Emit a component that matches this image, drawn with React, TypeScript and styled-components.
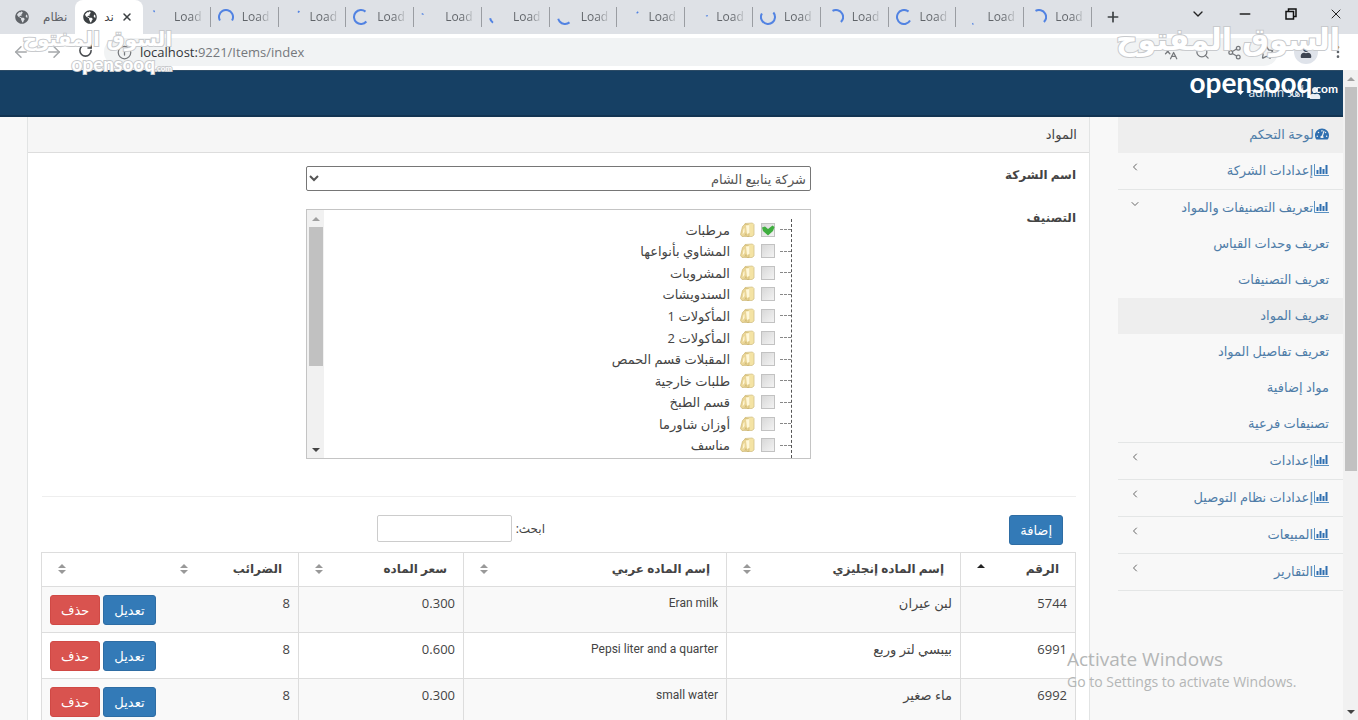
import React from "react";
import styled, { createGlobalStyle } from "styled-components";
import { ArrowLeft, ArrowRight, RotateCw, Info, X, Plus, ChevronDown, ChevronLeft, Search, Share2, Star, MoreVertical, Minus, Languages } from "lucide-react";
import { FaTachometerAlt, FaGlobeAmericas, FaUser } from "react-icons/fa";

const GlobalStyle = createGlobalStyle`
  * { box-sizing: border-box; }
  body { margin: 0; background: #f8f8f8; color: #444; font: 13px/20px "Open Sans", "DejaVu Sans", sans-serif; }
  a { color: #4f7da8; text-decoration: none; }
  ul { list-style: none; margin: 0; padding: 0; }
  button, input, select { font: inherit; }
`;

const Browser = styled.div`
  position: relative;
  display: flex;
  flex-direction: column;
  height: 100vh;
  overflow: hidden;
`;

const TabStrip = styled.div`
  display: flex;
  flex: none;
  height: 34px;
  background: #dee1e6;
  color: #5f6368;
`;

const FirstTab = styled.div`
  display: flex;
  align-items: center;
  gap: 14px;
  width: 75px;
  padding-left: 15px;
  font-size: 12px;
`;

const ActiveTab = styled.div`
  display: flex;
  align-items: center;
  justify-content: space-between;
  width: 68px;
  padding: 0 10px 0 8px;
  border-radius: 8px 8px 0 0;
  background: #fff;
  font-size: 12px;
  color: #3c4043;
`;

const LoadingTabs = styled.div`
  display: flex;
  flex: 1;
  align-items: center;
`;

const LoadingTab = styled.div`
  display: flex;
  flex: 1 1 0;
  align-items: center;
  gap: 8px;
  height: 20px;
  padding-left: 7px;
  border-right: 1px solid #9a9da2;
  font-size: 12px;
`;

const TabLabel = styled.span`
  background: linear-gradient(90deg, #5f6368 60%, #c4c7cb);
  background-clip: text;
  color: transparent;
`;

const IconButton = styled.button`
  display: flex;
  align-items: center;
  justify-content: center;
  padding: 0;
  border: 0;
  background: none;
  color: inherit;
`;

const NewTab = styled(IconButton)`
  width: 42px;
  color: #3c4043;
`;

const WindowControls = styled.div`
  display: flex;
  width: 224px;
  justify-content: space-between;
  padding: 0 14px 6px 56px;
  color: #222;
`;

const Toolbar = styled.div`
  display: flex;
  flex: none;
  align-items: center;
  height: 36px;
  padding: 0 12px;
  background: #fff;
  color: #5f6368;
`;

const NavIcons = styled.div`
  display: flex;
  gap: 15px;
  width: 92px;
  color: #a5a8ab;
`;

const Address = styled.div`
  display: flex;
  flex: 1;
  align-items: center;
  gap: 8px;
  height: 28px;
  padding: 0 4px 0 13px;
  border-radius: 14px;
  background: #f1f3f4;
  font-size: 13px;
  color: #75787c;
  b { font-weight: 400; color: #333639; }
`;

const AddressActions = styled.div`
  display: flex;
  gap: 17px;
  margin-left: auto;
`;

const ProfileArea = styled.div`
  display: flex;
  align-items: center;
  gap: 12px;
  padding-left: 16px;
`;

const Avatar = styled.span`
  display: flex;
  align-items: center;
  justify-content: center;
  width: 24px;
  height: 24px;
  border-radius: 50%;
  background: #dfe3ea;
  color: #3c4350;
`;

const Viewport = styled.div`
  display: flex;
  flex: 1;
  min-height: 0;
`;

const Site = styled.div`
  display: flex;
  flex: 1;
  flex-direction: column;
  min-width: 0;
  overflow: hidden;
`;

const Navbar = styled.header`
  display: flex;
  flex: none;
  align-items: center;
  gap: 5px;
  height: 47px;
  padding: 0 22px;
  border-top: 1px solid #2d4c66;
  border-bottom: 2px solid #123452;
  background: #164064;
  color: #e8eef4;
  font-size: 12px;
`;

const Columns = styled.div`
  display: flex;
  align-items: stretch;
`;

const Sidebar = styled.nav`
  flex: none;
  width: 253px;
  padding-left: 28px;
`;

const MenuLink = styled.a<{ $active?: boolean }>`
  display: flex;
  align-items: center;
  gap: 1px;
  height: 36px;
  padding: 0 14px 2px 11px;
  background: ${(p) => (p.$active ? "#eeeeee" : "transparent")};
`;

const MenuItem = styled.li`
  border-bottom: 1px solid #e4e6e6;
  &:first-child { border-bottom: 0; }
`;

const Arrow = styled.span`
  display: flex;
  margin-right: auto;
  padding-bottom: 6px;
  color: #666;
`;

const Content = styled.main`
  flex: 1;
  min-width: 0;
  margin-left: 27px;
  border: 1px solid #e2e4e4;
  border-width: 0 1px;
  background: #fff;
`;

const PanelHeading = styled.h1`
  margin: 0;
  height: 36px;
  padding: 7px 12px;
  border-bottom: 1px solid #ddd;
  background: #f6f6f6;
  font-size: 13px;
  line-height: 20px;
  font-weight: 400;
`;

const PanelBody = styled.div`
  padding: 13px 13px 13px 14px;
`;

const FormRow = styled.div`
  display: grid;
  grid-template-columns: 265fr 505fr 264fr;
  align-items: start;
  margin-bottom: 18px;
`;

const fieldName = `
  font-size: 12px;
  line-height: 18px;
  font-weight: 700;
`;

const FieldLabel = styled.label`
  ${fieldName}
`;

const FieldTitle = styled.span`
  ${fieldName}
`;

const Select = styled.select`
  height: 25px;
  width: 100%;
  border: 1px solid #767676;
  border-radius: 2px;
  background: #fff;
  color: #555;
`;

const TreeBox = styled.div`
  display: flex;
  height: 250px;
  border: 1px solid #c4c4c4;
`;

const Tree = styled.ul`
  display: flex;
  flex: 1;
  flex-direction: column;
  margin: 9px 18px 0 0;
  padding-bottom: 2px;
  border-right: 1px dashed #555;
`;

const TreeRow = styled.li`
  display: flex;
  flex: 1;
  align-items: center;
  &::before {
    content: "";
    width: 11px;
    margin-left: 5px;
    border-top: 1px dashed #888;
  }
`;

const TreeLabel = styled.label`
  display: flex;
  align-items: center;
  gap: 6px;
  span { padding-right: 3px; }
`;

const CheckHolder = styled.i`
  position: relative;
  display: flex;
  svg { position: absolute; inset: 0; }
`;

const Check = styled.input`
  appearance: none;
  width: 14px;
  height: 14px;
  margin: 0;
  border: 1px solid #c2c2c2;
  background: linear-gradient(135deg, #d8d8d8, #f3f3f3);
`;

const Track = styled.div<{ $width: number }>`
  display: flex;
  flex: none;
  flex-direction: column;
  align-items: center;
  width: ${(p) => p.$width}px;
  background: #f1f1f1;
`;

const ScrollArrow = styled.button<{ $up?: boolean; $dim?: boolean }>`
  width: 100%;
  height: 17px;
  padding: 0;
  border: 0;
  background: none;
  &::before {
    content: "";
    display: block;
    width: 0;
    margin: 0 auto;
    border: 4px solid transparent;
    border-top-width: ${(p) => (p.$up ? 0 : 4)}px;
    border-bottom-width: ${(p) => (p.$up ? 4 : 0)}px;
    border-${(p) => (p.$up ? "bottom" : "top")}-color: ${(p) => (p.$dim ? "#a0a0a0" : "#444")};
  }
`;

const Thumb = styled.div<{ $share: number }>`
  width: calc(100% - 3px);
  height: ${(p) => p.$share}%;
  margin-bottom: auto;
  background: #c1c1c1;
`;

const Divider = styled.hr`
  margin: 37px 0 18px;
  border: 0;
  border-top: 1px solid #eee;
`;

const TableTools = styled.div`
  display: grid;
  grid-template-columns: 518fr 503fr;
  align-items: start;
  height: 37px;
  padding-right: 13px;
`;

const Button = styled.button<{ $danger?: boolean }>`
  height: 30px;
  padding: 0 10px;
  border: 1px solid ${(p) => (p.$danger ? "#d04945" : "#2e6da4")};
  border-radius: 3px;
  background: ${(p) => (p.$danger ? "#d9534f" : "#337ab7")};
  color: #fff;
  font-size: 13px;
  line-height: 20px;
`;

const SearchLabel = styled.label`
  display: flex;
  align-items: center;
  gap: 4px;
  font-size: 12px;
`;

const SearchInput = styled.input`
  width: 135px;
  height: 27px;
  border: 1px solid #ccc;
  border-radius: 2px;
  background: #fff;
`;

const Table = styled.table`
  width: 100%;
  table-layout: fixed;
  border-collapse: collapse;
  border: 1px solid #ddd;
  font-size: 13px;
`;

const HeadCell = styled.th<{ $open?: boolean }>`
  height: 34px;
  padding: 0 16px 2px;
  border: 1px solid #ddd;
  border-width: 1px ${(p) => (p.$open ? 0 : 1)}px 1px 0;
  font-size: 12px;
  text-align: right;
  div { display: flex; align-items: center; justify-content: space-between; }
`;

const Row = styled.tr`
  height: 46px;
  border-bottom: 1px solid #ddd;
  &:nth-child(odd) { background: #f9f9f9; }
`;

const Cell = styled.td<{ $open?: boolean; $latin?: boolean }>`
  padding: 6px 8px;
  border-right: ${(p) => (p.$open ? 0 : 1)}px solid #ddd;
  ${(p) => p.$latin && "font-family: Roboto, sans-serif; font-size: 12px;"}
  vertical-align: top;
  text-align: right;
`;

const Actions = styled.div`
  display: flex;
  justify-content: flex-end;
  gap: 3px;
  padding-top: 2px;
`;

const Activate = styled.div`
  position: absolute;
  right: 56px;
  bottom: 28px;
  width: 235px;
  color: #b4b6b6;
  font-size: 14px;
  line-height: 20px;
  white-space: nowrap;
  strong { display: block; font-size: 19px; line-height: 26px; font-weight: 400; }
`;

const Mark = styled.div<{ $small?: boolean }>`
  position: absolute;
  top: ${(p) => (p.$small ? 22 : 15)}px;
  ${(p) => (p.$small ? "left: 20px" : "right: 20px")};
  width: ${(p) => (p.$small ? 152 : 222)}px;
  color: #fff;
  font-family: "DejaVu Sans", sans-serif;
  font-weight: 700;
  font-size: ${(p) => (p.$small ? 20 : 30)}px;
  line-height: ${(p) => (p.$small ? 34 : 50)}px;
  text-align: right;
  white-space: nowrap;
  -webkit-text-stroke: 2px #c8cacd;
  paint-order: stroke fill;
  pointer-events: none;
`;

const MarkLatin = styled.div<{ $small?: boolean }>`
  font-family: Lato, sans-serif;
  font-size: ${(p) => (p.$small ? 19 : 28)}px;
  line-height: ${(p) => (p.$small ? 16 : 34)}px;
  -webkit-text-stroke: ${(p) => (p.$small ? "2px #c8cacd" : "0")};
  small { font-size: ${(p) => (p.$small ? 8 : 12)}px; }
`;

const arcs: [number, number][] = [
  [320, 12], [240, 240], [35, 14], [130, 270], [290, 10], [215, 45], [140, 115],
  [45, 12], [75, 10], [50, 250], [330, 165], [120, 280], [160, 10], [330, 165],
];

function Spinner({ start, sweep }: { start: number; sweep: number }) {
  return (
    <svg width="16" height="16" viewBox="0 0 16 16" aria-hidden="true">
      <circle cx="8" cy="8" r="7" fill="none" stroke="#5283e2" strokeWidth="2" pathLength={360} strokeDasharray={`${sweep} 360`} transform={`rotate(${start - 90} 8 8)`} />
    </svg>
  );
}

function ChartIcon() {
  return (
    <svg width="15" height="12" viewBox="0 0 15 12" aria-hidden="true">
      <path d="M.5 0v11.5H15" fill="none" stroke="#5a91c2" />
      <path d="M2.500 6h2v4h-2zM5.500 3h2v7h-2zM8.500 5h2v5h-2zM11.500 1h2v9h-2z" fill="#2f6fb0" />
    </svg>
  );
}

function FolderIcon() {
  return (
    <svg width="16" height="16" viewBox="0 0 16 16" aria-hidden="true">
      <path d="M6 1.500 13.500 1 15 2.500V13l-2 1.500H6z" fill="#f4e3a4" stroke="#d3c28a" strokeWidth=".8" />
      <path d="M6 2 3.500 4.500 1.500 12.500l1.500 2h2.500l1.500-3 1 3H10V3z" fill="#ead596" stroke="#c8b06a" strokeWidth=".6" />
      <path d="M7 3.500 10.500 3v8L8 12zM4.500 7 5.500 6v4l-2 2.500z" fill="#fff8d9" />
    </svg>
  );
}

function SortIcon({ up }: { up?: boolean }) {
  return (
    <svg width="8" height="12" viewBox="0 0 8 12" aria-hidden="true">
      <path d="M0 5 4 1l4 4z" fill={up ? "#222" : "#999"} />
      {!up && <path d="M0 7h8l-4 4z" fill="#999" />}
    </svg>
  );
}

function Caret() {
  return (
    <svg width="7" height="4" viewBox="0 0 7 4" aria-hidden="true">
      <path d="M0 0h7L3.500 4z" fill="#fff" />
    </svg>
  );
}

const subItems = ["تعريف وحدات القياس", "تعريف التصنيفات", "تعريف المواد", "تعريف تفاصيل المواد", "مواد إضافية", "تصنيفات فرعية"];
const lowerItems = ["إعدادات", "إعدادات نظام التوصيل", "المبيعات", "التقارير"];
const categories = ["مرطبات", "المشاوي بأنواعها", "المشروبات", "السندويشات", "المأكولات 1", "المأكولات 2", "المقبلات قسم الحمص", "طلبات خارجية", "قسم الطبخ", "أوزان شاورما", "مناسف"];
const headings = ["الرقم", "إسم الماده إنجليزي", "إسم الماده عربي", "سعر الماده", "الضرائب", ""];
const widths = [115, 234, 263, 165, 135, 122];
const items = [
  ["5744", "لبن عيران", "Eran milk", "0.300", "8"],
  ["6991", "بيبسي لتر وربع", "Pepsi liter and a quarter", "0.600", "8"],
  ["6992", "ماء صغير", "small water", "0.300", "8"],
];

function MenuGroup({ text, open }: { text: string; open?: boolean }) {
  return (
    <MenuLink href="#">
      <ChartIcon />
      {text}
      <Arrow>{open ? <ChevronDown size={12} /> : <ChevronLeft size={12} />}</Arrow>
    </MenuLink>
  );
}

export default function App() {
  return (
    <Browser>
      <GlobalStyle />
      <TabStrip>
        <FirstTab><FaGlobeAmericas size={14} /><span>نظام</span></FirstTab>
        <ActiveTab><FaGlobeAmericas size={14} /><span>ند</span><X size={12} strokeWidth={3} /></ActiveTab>
        <LoadingTabs>
          {arcs.map(([start, sweep], i) => (
            <LoadingTab key={i}><Spinner start={start} sweep={sweep} /><TabLabel>Load</TabLabel></LoadingTab>
          ))}
        </LoadingTabs>
        <NewTab aria-label="New tab"><Plus size={16} strokeWidth={2.5} /></NewTab>
        <WindowControls>
          <IconButton aria-label="Tabs"><ChevronDown size={16} strokeWidth={2} /></IconButton>
          <IconButton aria-label="Minimize"><Minus size={16} strokeWidth={2.5} /></IconButton>
          <IconButton aria-label="Restore">
            <svg width="12" height="12" viewBox="0 0 12 12" fill="none" stroke="#111" strokeWidth="1.5"><path d="M1 3.500h7.500V11H1zM3.500 3.500V1H11v7.500H8.500" /></svg>
          </IconButton>
          <IconButton aria-label="Close"><X size={16} strokeWidth={1.5} /></IconButton>
        </WindowControls>
      </TabStrip>
      <Toolbar>
        <NavIcons>
          <ArrowLeft size={18} /><ArrowRight size={18} /><RotateCw size={15} color="#4a4d51" strokeWidth={2.5} />
        </NavIcons>
        <Address>
          <Info size={15} />
          <span><b>localhost:</b>9221/Items/index</span>
          <AddressActions><Languages size={15} /><Search size={15} /><Share2 size={15} /><Star size={15} /></AddressActions>
        </Address>
        <ProfileArea><Avatar><FaUser size={12} /></Avatar><MoreVertical size={16} /></ProfileArea>
      </Toolbar>
      <Viewport>
        <Site dir="rtl">
          <Navbar><FaUser size={12} /><span>أهلا admin</span><Caret /></Navbar>
          <Columns>
            <Sidebar>
              <ul>
                <MenuItem><MenuLink href="#" $active><FaTachometerAlt size={14} color="#2f6fb0" />لوحة التحكم</MenuLink></MenuItem>
                <MenuItem><MenuGroup text="إعدادات الشركة" /></MenuItem>
                <MenuItem>
                  <MenuGroup text="تعريف التصنيفات والمواد" open />
                  <ul>
                    {subItems.map((s, i) => (
                      <li key={s}><MenuLink href="#" $active={i === 2}>{s}</MenuLink></li>
                    ))}
                  </ul>
                </MenuItem>
                {lowerItems.map((s) => <MenuItem key={s}><MenuGroup text={s} /></MenuItem>)}
              </ul>
            </Sidebar>
            <Content>
              <PanelHeading>المواد</PanelHeading>
              <PanelBody>
                <FormRow>
                  <FieldLabel htmlFor="company">اسم الشركة</FieldLabel>
                  <Select id="company"><option>شركة ينابيع الشام</option></Select>
                </FormRow>
                <FormRow>
                  <FieldTitle>التصنيف</FieldTitle>
                  <TreeBox>
                    <Tree>
                      {categories.map((c, i) => (
                        <TreeRow key={c}>
                          <TreeLabel>
                            <CheckHolder>
                              <Check type="checkbox" defaultChecked={i === 0} />
                              {i === 0 && <svg width="14" height="14" viewBox="0 0 14 14"><path d="M1 4.500 4 3.500l3 2.500 4.500-3.500L13.500 4 12 8l-5 4.500L2 8z" fill="#3fae3f" /></svg>}
                            </CheckHolder>
                            <FolderIcon />
                            <span>{c}</span>
                          </TreeLabel>
                        </TreeRow>
                      ))}
                    </Tree>
                    <Track $width={17}>
                      <ScrollArrow $up $dim aria-label="Scroll up" />
                      <Thumb $share={56} />
                      <ScrollArrow aria-label="Scroll down" />
                    </Track>
                  </TreeBox>
                </FormRow>
                <Divider />
                <TableTools>
                  <div><Button>إضافة</Button></div>
                  <SearchLabel>ابحث:<SearchInput type="search" /></SearchLabel>
                </TableTools>
                <Table>
                  <colgroup>{widths.map((w, i) => <col key={i} style={{ width: w }} />)}</colgroup>
                  <thead>
                    <tr>
                      {headings.map((h, i) => (
                        <HeadCell key={i} $open={i === 5}><div><span>{h}</span><SortIcon up={i === 0} /></div></HeadCell>
                      ))}
                    </tr>
                  </thead>
                  <tbody>
                    {items.map((r) => (
                      <Row key={r[0]}>
                        {r.map((v, i) => <Cell key={i} $latin={i === 2}>{v}</Cell>)}
                        <Cell $open><Actions><Button>تعديل</Button><Button $danger>حذف</Button></Actions></Cell>
                      </Row>
                    ))}
                  </tbody>
                </Table>
              </PanelBody>
            </Content>
          </Columns>
        </Site>
        <Track $width={15}>
          <ScrollArrow $up $dim aria-label="Scroll up" />
          <Thumb $share={59} />
          <ScrollArrow aria-label="Scroll down" />
        </Track>
      </Viewport>
      <Mark $small>السوق المفتوح<MarkLatin $small>opensooq<small>.com</small></MarkLatin></Mark>
      <Mark>السوق المفتوح<MarkLatin>opensooq<small>.com</small></MarkLatin></Mark>
      <Activate><strong>Activate Windows</strong>Go to Settings to activate Windows.</Activate>
    </Browser>
  );
}
